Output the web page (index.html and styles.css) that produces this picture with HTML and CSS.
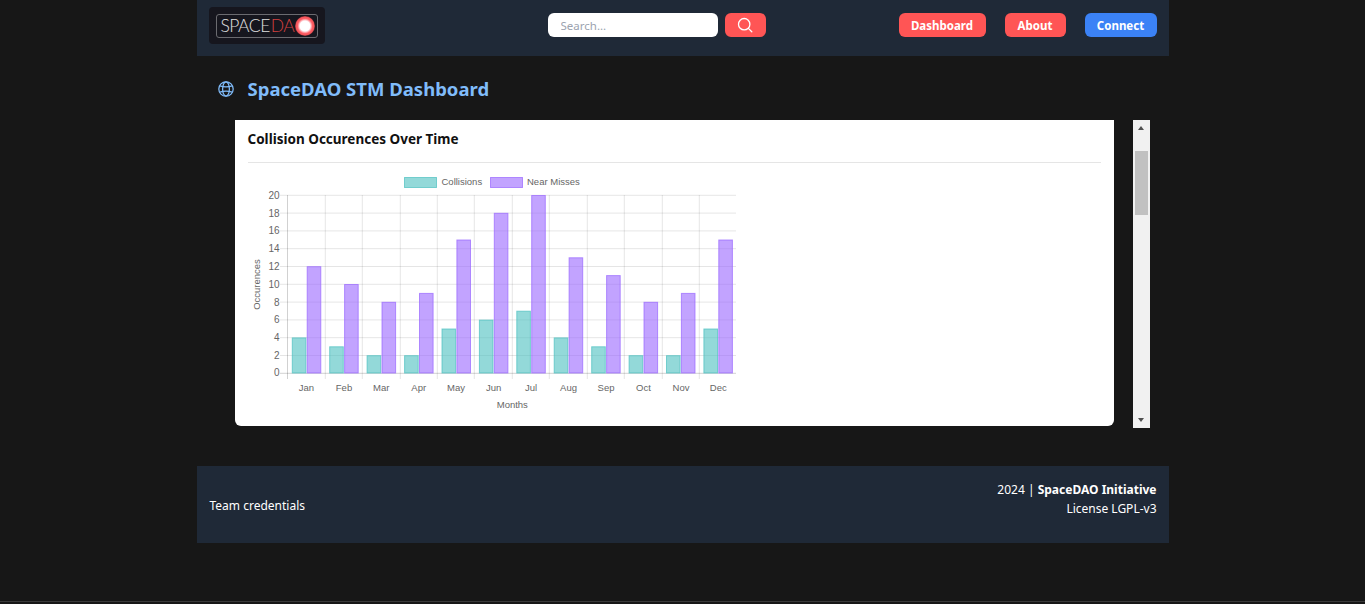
FILE: index.html
```html
<!DOCTYPE html>
<html lang="en">
<head>
  <meta charset="UTF-8">
  <title>SpaceDAO STM Dashboard</title>
  <link rel="stylesheet" href="styles.css">
</head>
<body>
  <div class="container">
    <header class="navbar">
      <a class="logo">
        <span class="logo-box">
          <span class="logo-space">SPACE</span><span class="logo-da">DA</span><span class="logo-dot"></span>
        </span>
      </a>
      <form class="search">
        <input type="text" placeholder="Search...">
        <button type="button" class="btn btn-red btn-search">
          <svg width="16" height="16" viewBox="0 0 16 16" fill="none" stroke="#fff" stroke-width="1.3" stroke-linecap="round">
            <circle cx="7.2" cy="7.2" r="5.7"/>
            <path d="M11.4 11.4 14.8 14.8"/>
          </svg>
        </button>
      </form>
      <nav class="nav-links">
        <a class="btn btn-red btn-dashboard">Dashboard</a>
        <a class="btn btn-red btn-about">About</a>
        <a class="btn btn-blue btn-connect">Connect</a>
      </nav>
    </header>

    <div class="page-title">
      <svg width="16" height="16" viewBox="0 0 16 16" fill="none" stroke="#80bcfa" stroke-width="1.25">
        <circle cx="8" cy="8" r="7.2"/>
        <ellipse cx="8" cy="8" rx="3.4" ry="7.2"/>
        <path d="M1.8 4.8Q8 7 14.2 4.8M1.8 11.2Q8 9 14.2 11.2"/>
      </svg>
      <h1>SpaceDAO STM Dashboard</h1>
    </div>

    <main class="scroll-area">
      <section class="card">
        <h2>Collision Occurences Over Time</h2>
        <svg class="chart" width="500" height="250" viewBox="248 170 500 250">
          <g class="grid">
            <path d="M287.5 195.3H736M280 213.1H736M280 230.9H736M280 248.7H736M280 266.5H736M280 284.3H736M280 302.1H736M280 319.9H736M280 337.7H736M280 355.5H736M280 195.3H287.5"/>
            <path d="M325.3 195V379M362.3 195V379M400.3 195V379M437.3 195V379M474.3 195V379M512.3 195V379M549.3 195V379M587.3 195V379M624.3 195V379M662.3 195V379M699.3 195V379"/>
          </g>
          <path class="axis" d="M287.5 195V379M280 373.3H736"/>

          <g class="bars-teal">
            <rect x="292.3" y="337.9" width="13.6" height="35.1"/>
            <rect x="329.7" y="346.8" width="13.6" height="26.2"/>
            <rect x="367.1" y="355.7" width="13.6" height="17.3"/>
            <rect x="404.6" y="355.7" width="13.6" height="17.3"/>
            <rect x="442" y="329" width="13.6" height="44"/>
            <rect x="479.4" y="320.1" width="13.6" height="52.9"/>
            <rect x="516.8" y="311.2" width="13.6" height="61.8"/>
            <rect x="554.2" y="337.9" width="13.6" height="35.1"/>
            <rect x="591.7" y="346.8" width="13.6" height="26.2"/>
            <rect x="629.1" y="355.7" width="13.6" height="17.3"/>
            <rect x="666.5" y="355.7" width="13.6" height="17.3"/>
            <rect x="703.9" y="329" width="13.6" height="44"/>
          </g>
          <g class="bars-purple">
            <rect x="307.2" y="266.7" width="13.6" height="106.3"/>
            <rect x="344.6" y="284.5" width="13.6" height="88.5"/>
            <rect x="382" y="302.3" width="13.6" height="70.7"/>
            <rect x="419.5" y="293.4" width="13.6" height="79.6"/>
            <rect x="456.9" y="240" width="13.6" height="133"/>
            <rect x="494.3" y="213.3" width="13.6" height="159.7"/>
            <rect x="531.7" y="195.5" width="13.6" height="177.5"/>
            <rect x="569.1" y="257.8" width="13.6" height="115.2"/>
            <rect x="606.6" y="275.6" width="13.6" height="97.4"/>
            <rect x="644" y="302.3" width="13.6" height="70.7"/>
            <rect x="681.4" y="293.4" width="13.6" height="79.6"/>
            <rect x="718.8" y="240" width="13.6" height="133"/>
          </g>

          <g class="bars-teal"><rect x="404.5" y="177.5" width="32" height="10"/></g>
          <g class="bars-purple"><rect x="490.5" y="177.5" width="32" height="10"/></g>
          <text class="label" x="441.5" y="185">Collisions</text>
          <text class="label" x="527" y="185">Near Misses</text>

          <g class="label y-ticks">
            <text x="279.5" y="198.8">20</text>
            <text x="279.5" y="216.6">18</text>
            <text x="279.5" y="234.4">16</text>
            <text x="279.5" y="252.2">14</text>
            <text x="279.5" y="270">12</text>
            <text x="279.5" y="287.8">10</text>
            <text x="279.5" y="305.6">8</text>
            <text x="279.5" y="323.4">6</text>
            <text x="279.5" y="341.2">4</text>
            <text x="279.5" y="359">2</text>
            <text x="279.5" y="376.3">0</text>
          </g>
          <g class="label x-ticks">
            <text x="306.3" y="391">Jan</text>
            <text x="344" y="391">Feb</text>
            <text x="381.3" y="391">Mar</text>
            <text x="418.7" y="391">Apr</text>
            <text x="456" y="391">May</text>
            <text x="493.6" y="391">Jun</text>
            <text x="531" y="391">Jul</text>
            <text x="568.5" y="391">Aug</text>
            <text x="606" y="391">Sep</text>
            <text x="643.5" y="391">Oct</text>
            <text x="681" y="391">Nov</text>
            <text x="718.3" y="391">Dec</text>
          </g>
          <text class="label x-ticks" x="512.3" y="408">Months</text>
          <text class="label x-ticks" transform="translate(260 284.5) rotate(-90)">Occurences</text>
        </svg>
      </section>
      <div class="scrollbar">
        <span class="arrow-up"></span>
        <span class="thumb"></span>
        <span class="arrow-down"></span>
      </div>
    </main>

    <footer class="footer">
      <span class="footer-left">Team credentials</span>
      <div class="footer-right">
        <div>2024 | <strong>SpaceDAO Initiative</strong></div>
        <div>License LGPL-v3</div>
      </div>
    </footer>
  </div>
  <div class="page-end"></div>
</body>
</html>
```

FILE: styles.css
```css
html, body {
  margin: 0;
  padding: 0;
}
body {
  background: #171717;
  font-family: "Noto Sans", "Open Sans", sans-serif;
  color: #fff;
  overflow: hidden;
}
.container {
  width: 972px;
  margin: 0 auto;
}

/* navbar */
.navbar {
  height: 56px;
  background: #1f2937;
  display: flex;
  align-items: center;
  padding: 0 12px 6px;
  box-sizing: border-box;
}
.logo {
  width: 116px;
  height: 37px;
  background: #16161e;
  border-radius: 4px;
  display: flex;
  align-items: center;
  justify-content: center;
  margin-top: 1px;
}
.logo-box {
  width: 102px;
  height: 24px;
  box-sizing: border-box;
  border: 1px solid #6b6b70;
  border-radius: 3px;
  display: flex;
  align-items: center;
  padding-left: 4px;
  font-family: "Lato", sans-serif;
  font-weight: 300;
  font-size: 17.5px;
  letter-spacing: -0.5px;
}
.logo-space {
  color: #e0e0e0;
}
.logo-da {
  color: #d2403f;
  margin-left: 1px;
}
.logo-dot {
  flex: none;
  width: 20px;
  height: 20px;
  margin-left: 1px;
  border-radius: 50%;
  background: radial-gradient(circle, #fff 0 5px, #ffc2c6 6px, #ff5f66 7.5px, #f2555a 9px, #8e2f35 10px);
}
.search {
  display: flex;
  gap: 7px;
  margin-left: 223px;
}
.search input {
  width: 170px;
  height: 24px;
  box-sizing: border-box;
  border: none;
  border-radius: 6px;
  padding: 0 13px;
  font-family: inherit;
  font-size: 11.5px;
  background: #fff;
}
.search input::placeholder {
  color: #9ca3af;
}
.btn {
  height: 24px;
  box-sizing: border-box;
  border: none;
  border-radius: 6px;
  color: #fff;
  font-weight: 700;
  font-size: 11.5px;
  display: flex;
  align-items: center;
  justify-content: center;
}
.btn-red {
  background: #ff5555;
}
.btn-blue {
  background: #3b82f6;
}
.btn-search {
  width: 41px;
  padding: 0;
}
.nav-links {
  display: flex;
  gap: 19px;
  margin-left: auto;
}
.btn-dashboard {
  width: 87px;
}
.btn-about {
  width: 61px;
}
.btn-connect {
  width: 72px;
}

/* title */
.page-title {
  height: 64px;
  box-sizing: border-box;
  padding: 1px 0 0 21px;
  display: flex;
  align-items: center;
  gap: 14px;
}
.page-title h1 {
  margin: 0;
  font-size: 18.5px;
  font-weight: 700;
  color: #80bcfa;
}

/* scroll box */
.scroll-area {
  display: flex;
  align-items: flex-start;
  gap: 19px;
  margin-left: 38px;
  height: 308px;
}
.card {
  width: 879px;
  height: 306px;
  box-sizing: border-box;
  background: #fff;
  border-radius: 0 0 6px 6px;
  padding: 0 13px;
}
.card h2 {
  margin: 0;
  height: 43px;
  box-sizing: border-box;
  padding-top: 9px;
  font-size: 13.5px;
  line-height: 20px;
  font-weight: 700;
  color: #111;
  border-bottom: 1px solid #e5e5e5;
}
.chart {
  display: block;
  margin-top: 7px;
}
.grid path {
  fill: none;
  stroke: rgba(0, 0, 0, 0.1);
  stroke-width: 1;
}
.axis {
  fill: none;
  stroke: rgba(0, 0, 0, 0.18);
}
.bars-teal rect {
  fill: rgba(75, 192, 192, 0.6);
  stroke: rgba(75, 192, 192, 0.7);
}
.bars-purple rect {
  fill: rgba(153, 102, 255, 0.6);
  stroke: rgba(153, 102, 255, 0.7);
}
.label {
  font-family: "Liberation Sans", Arial, sans-serif;
  font-size: 9.5px;
  fill: #666;
}
.y-ticks text {
  font-size: 10px;
  text-anchor: end;
}
.x-ticks {
  text-anchor: middle;
}

.scrollbar {
  width: 17px;
  height: 308px;
  background: #f1f1f1;
  position: relative;
}
.thumb {
  position: absolute;
  top: 31px;
  left: 2px;
  width: 13px;
  height: 64px;
  background: #c1c1c1;
}
.arrow-up, .arrow-down {
  position: absolute;
  left: 5px;
  width: 0;
  height: 0;
  border-left: 3.5px solid transparent;
  border-right: 3.5px solid transparent;
}
.arrow-up {
  top: 6px;
  border-bottom: 4px solid #505050;
}
.arrow-down {
  bottom: 6px;
  border-top: 4px solid #505050;
}

/* footer */
.footer {
  height: 77px;
  margin-top: 38px;
  background: #1f2937;
  display: flex;
  align-items: center;
  justify-content: space-between;
  padding: 0 12px;
  box-sizing: border-box;
  font-size: 12px;
}
.footer-left {
  margin: 2px 0 0 1px;
}
.footer-right {
  text-align: right;
  line-height: 19px;
  margin-bottom: 11px;
}
.page-end {
  margin-top: 58px;
  height: 1px;
  background: #3a3a3a;
}
```
